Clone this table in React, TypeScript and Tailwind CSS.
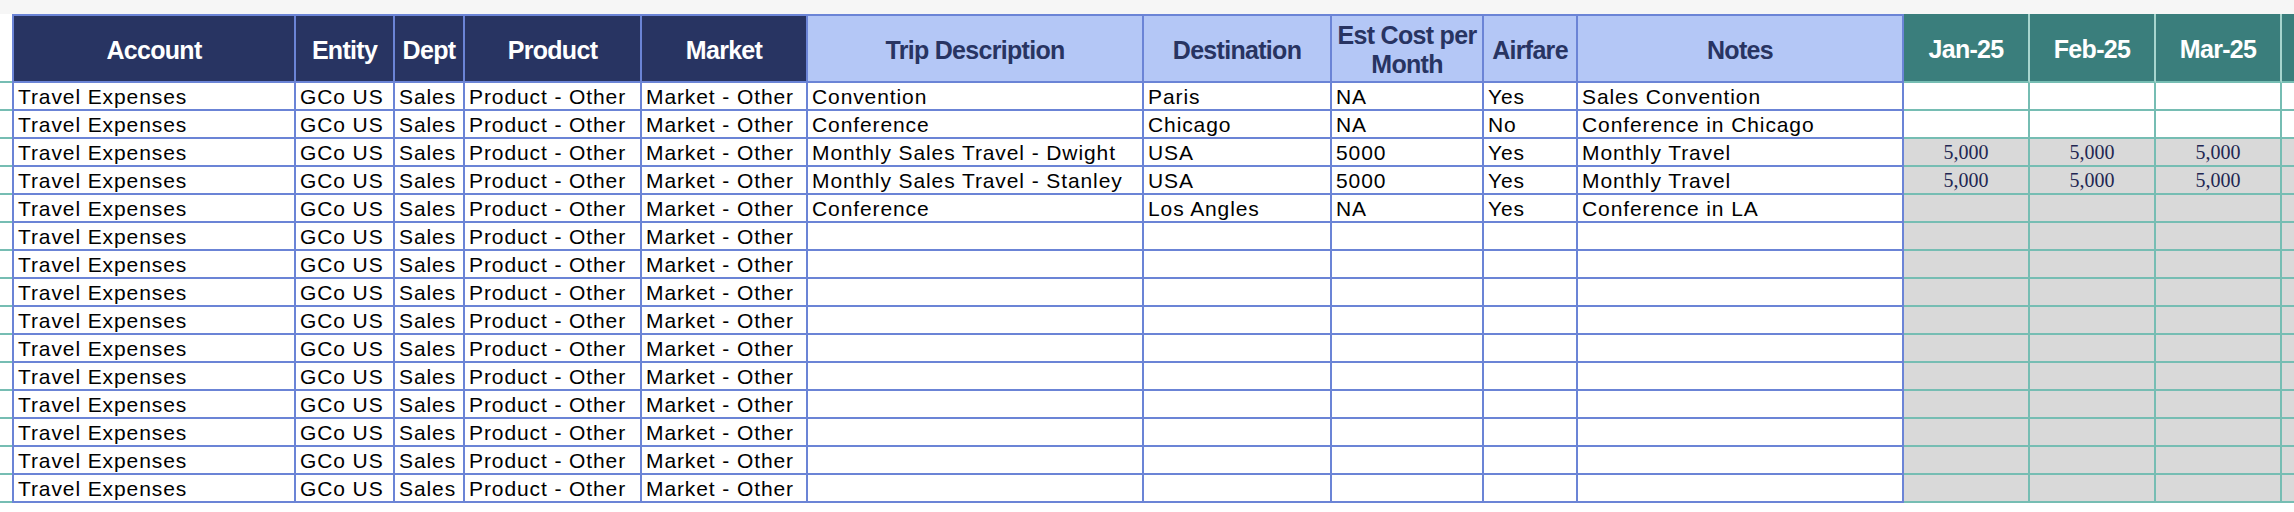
import React from 'react';

type Row = {
  trip: string;
  dest: string;
  cost: string;
  air: string;
  notes: string;
  months: string[];
  shaded: boolean;
};

const filled: Row[] = [
  { trip: 'Convention', dest: 'Paris', cost: 'NA', air: 'Yes', notes: 'Sales Convention', months: ['', '', '', ''], shaded: false },
  { trip: 'Conference', dest: 'Chicago', cost: 'NA', air: 'No', notes: 'Conference in Chicago', months: ['', '', '', ''], shaded: false },
  { trip: 'Monthly Sales Travel - Dwight', dest: 'USA', cost: '5000', air: 'Yes', notes: 'Monthly Travel', months: ['5,000', '5,000', '5,000', ''], shaded: true },
  { trip: 'Monthly Sales Travel - Stanley', dest: 'USA', cost: '5000', air: 'Yes', notes: 'Monthly Travel', months: ['5,000', '5,000', '5,000', ''], shaded: true },
  { trip: 'Conference', dest: 'Los Angles', cost: 'NA', air: 'Yes', notes: 'Conference in LA', months: ['', '', '', ''], shaded: true },
];

// pad out to 15 rows, the empty ones keep the grey month cells
const rows: Row[] = [
  ...filled,
  ...Array.from({ length: 10 }, () => ({ trip: '', dest: '', cost: '', air: '', notes: '', months: ['', '', '', ''], shaded: true })),
];

// last column only peeks in at the right edge, so no label shows
const months = ['Jan-25', 'Feb-25', 'Mar-25', ''];

const head = "font-['Liberation_Sans',Arial,sans-serif] font-bold text-[25px] tracking-[-0.7px] leading-[29px] flex items-center justify-center text-center pt-[3px]";
const body = "font-['Liberation_Sans',Arial,sans-serif] text-[21px] tracking-[0.9px] leading-[26px] text-black flex items-center pl-1 pt-px whitespace-nowrap overflow-hidden border-r-2 border-b-2 border-[#6b84d6] bg-white";

const App: React.FC = () => {
  return (
    <div className="w-[2294px] h-[512px] overflow-hidden bg-white">
      {/* toolbar strip above the sheet */}
      <div className="h-[14px] bg-[#f6f6f6]" />

      <div className="grid grid-cols-[12px_284px_99px_70px_177px_166px_336px_188px_152px_94px_326px_126px_126px_126px_126px] grid-rows-[69px_repeat(15,28px)] w-[2408px]">
        {/* header row */}
        <div className="border-b-2 border-[#76bdb3] bg-white" />
        <div className={`${head} bg-[#283462] text-white border-2 border-[#6b84d6]`}>Account</div>
        {['Entity', 'Dept', 'Product', 'Market'].map((h) => (
          <div key={h} className={`${head} bg-[#283462] text-white border-t-2 border-r-2 border-b-2 border-[#6b84d6]`}>
            {h}
          </div>
        ))}
        {['Trip Description', 'Destination', 'Est Cost per Month', 'Airfare', 'Notes'].map((h) => (
          <div key={h} className={`${head} bg-[#b4c7f6] text-[#283462] border-t-2 border-r-2 border-b-2 border-[#6b84d6]`}>
            {h === 'Est Cost per Month' ? (
              <span>
                Est Cost per
                <br />
                Month
              </span>
            ) : (
              h
            )}
          </div>
        ))}
        {months.map((m, i) => (
          <div key={i} className={`${head} bg-[#3a7e7c] text-white border-r-2 border-r-[#a7d5ce] border-b-2 border-b-[#76bdb3]`}>
            {m}
          </div>
        ))}

        {/* body rows */}
        {rows.map((r, i) => (
          <React.Fragment key={i}>
            <div className="border-b-2 border-[#76bdb3] bg-white" />
            <div className={`${body} border-l-2`}>Travel Expenses</div>
            <div className={body}>GCo US</div>
            <div className={body}>Sales</div>
            <div className={body}>Product - Other</div>
            <div className={body}>Market - Other</div>
            <div className={body}>{r.trip}</div>
            <div className={body}>{r.dest}</div>
            <div className={body}>{r.cost}</div>
            <div className={body}>{r.air}</div>
            <div className={body}>{r.notes}</div>
            {r.months.map((v, j) => (
              <div
                key={j}
                className={`flex items-center justify-center border-r-2 border-b-2 border-[#76bdb3] font-['Liberation_Serif','Times_New_Roman',serif] text-[20px] text-[#1f2752] ${
                  r.shaded ? 'bg-[#d9d9d9]' : 'bg-white'
                }`}
              >
                {v}
              </div>
            ))}
          </React.Fragment>
        ))}
      </div>
    </div>
  );
};

export default App;
